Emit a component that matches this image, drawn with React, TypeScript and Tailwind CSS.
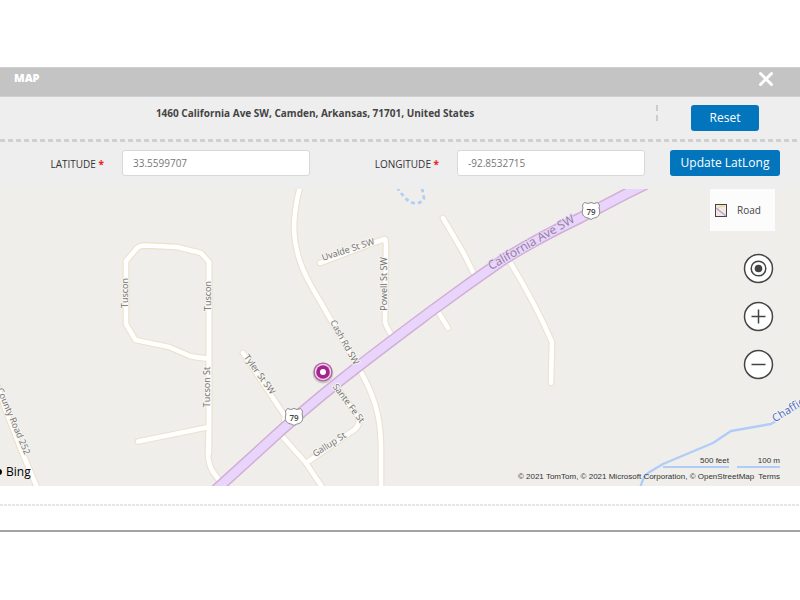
import { useState } from 'react'

type MapLabel = {
  text: string
  x: number
  y: number
  angle: number
  size?: number
  fill?: string
}

const STREETS = [
  'M209 453 L209 262 L201 253 L177 247 L145 245.500 Q140 245.500 137 248 L126 261 L126 324 L135.500 340 L169 347 L190 356 Q198 358 209 358.500',
  'M209 262 L209 425 L208 452 Q208 464 213 472 L222 484',
  'M138 441.500 L209 427',
  'M302 180 Q294 206 294 230 C295 258 307 280 320 301 L362 374 C378 403 381 425 381 450 L381 495',
  'M320 263 L373 243 L385 239 L386 245 L385 322 Q386 326 392 336',
  'M243 353 L285 416 L282 436 L306 463 L326 493',
  'M334 384 L357 415 Q362 424 354 430 L306 463',
  'M443 218 L463 252 L474 274',
  'M437 310 L448 328',
  'M510 262 Q535 303 552 342 L551 383',
  'M-6 376 L6 411 L22 452 L42 499',
]

const HIGHWAY = 'M190 514 L221 485 L265 445 C320 394 370 357 430 312 L470 283 L500 262 Q530 242 580 218 L626 194 L650 182'

const LABELS: MapLabel[] = [
  { text: 'Tuscon', x: 124, y: 293, angle: -90 },
  { text: 'Tuscon', x: 207, y: 296, angle: -90 },
  { text: 'Tucson St', x: 206, y: 387, angle: -90 },
  { text: 'Uvalde St SW', x: 348, y: 249, angle: -18 },
  { text: 'Powell St SW', x: 383, y: 284, angle: -90 },
  { text: 'Cash Rd SW', x: 345, y: 342, angle: 61 },
  { text: 'Tyler St SW', x: 260, y: 374, angle: 54 },
  { text: 'Sante Fe St', x: 349, y: 403, angle: 53 },
  { text: 'Gallup St', x: 329, y: 444, angle: -33 },
  { text: 'County Road 252', x: 14, y: 421, angle: 67 },
  { text: 'California Ave SW', x: 531, y: 242, angle: -30, size: 12, fill: '#8d7c9c' },
  { text: 'Chaffie', x: 788, y: 409, angle: -32, size: 11, fill: '#4a6cc4' },
]

export default function App() {
  const [latitude, setLatitude] = useState('33.5599707')
  const [longitude, setLongitude] = useState('-92.8532715')

  return (
    <div className="min-h-screen bg-white pt-[67px] font-['Open_Sans',sans-serif]">
      <section className="overflow-hidden border-b-2 border-[#a3a3a3]">
        <header className="flex h-[30px] items-start justify-between border-y border-[#d0d0d0] bg-[#c4c4c4] pr-[26px] pl-3.5">
          <h1 className="pt-0.5 text-[11px] leading-4 font-extrabold text-white">MAP</h1>
          <button type="button" aria-label="Close" className="pt-[3px] text-white">
            <CloseIcon />
          </button>
        </header>

        <div className="bg-[#eeeeee]">
          <div className="grid h-[42px] grid-cols-[1fr_110px] items-start gap-3 pt-2 pr-5">
            <div className="flex items-start">
              <p className="flex-1 text-center text-[10px] leading-4 font-bold text-[#444444]">
                1460 California Ave SW, Camden, Arkansas, 71701, United States
              </p>
              <div className="flex w-7 flex-col items-end gap-1" aria-hidden>
                <span className="h-1.5 w-0.5 bg-[#cccccc]" />
                <span className="h-1.5 w-0.5 bg-[#cccccc]" />
              </div>
            </div>
            <button
              type="button"
              onClick={() => {
                setLatitude('33.5599707')
                setLongitude('-92.8532715')
              }}
              className="h-[26px] w-[68px] justify-self-center rounded-[3px] bg-[#0275bd] text-xs font-medium text-white"
            >
              Reset
            </button>
          </div>

          <div className="h-[3px] bg-[repeating-linear-gradient(90deg,#d0d0d0_0_5px,transparent_5px_8px)]" />

          <form
            className="grid h-[47px] grid-cols-[1fr_1fr_110px] items-start gap-[25px] pt-2 pr-5"
            onSubmit={(e) => e.preventDefault()}
          >
            <Field id="latitude" label="LATITUDE" value={latitude} onChange={setLatitude} />
            <Field id="longitude" label="LONGITUDE" value={longitude} onChange={setLongitude} />
            <button
              type="submit"
              className="h-[26px] rounded-[3px] bg-[#0275bd] text-xs font-medium whitespace-nowrap text-white"
            >
              Update LatLong
            </button>
          </form>
        </div>

        <MapView />

        <div className="h-11 pt-[18px]">
          <div className="h-0.5 bg-[repeating-linear-gradient(90deg,#e6e6e6_0_3px,transparent_3px_4px)]" />
        </div>
      </section>
    </div>
  )
}

type FieldProps = {
  id: string
  label: string
  value: string
  onChange: (value: string) => void
}

function Field({ id, label, value, onChange }: FieldProps) {
  return (
    <div className="flex items-center gap-[18px]">
      <label htmlFor={id} className="flex-1 pt-0.5 text-right text-[10px] leading-4 font-medium text-[#333333]">
        {label} <span className="font-bold text-[#f02020]">*</span>
      </label>
      <input
        id={id}
        type="text"
        value={value}
        onChange={(e) => onChange(e.target.value)}
        className="h-[26px] w-[188px] min-w-0 rounded-[3px] border border-[#d8d8d8] bg-white px-2.5 text-[10px] text-[#777777]"
      />
    </div>
  )
}

function MapView() {
  return (
    <div className="relative h-[297px] overflow-hidden bg-[#efeeea]">
      <svg
        viewBox="0 189 800 297"
        preserveAspectRatio="xMidYMid slice"
        className="block h-full w-full"
        role="img"
        aria-label="Road map"
      >
        <g fill="none" strokeLinecap="round" strokeLinejoin="round">
          {STREETS.map((d) => (
            <path key={d} d={d} stroke="#ebe1cc" strokeWidth="6.800" />
          ))}
          {STREETS.map((d) => (
            <path key={d} d={d} stroke="#ffffff" strokeWidth="4.600" />
          ))}
          <path d={HIGHWAY} stroke="#d2aed6" strokeWidth="11.500" />
          <path d={HIGHWAY} stroke="#e9d5fb" strokeWidth="8.500" />
          <path
            d="M397 187 Q403 197 410 202 Q420 206 424 198 L422 188"
            stroke="#b3cdf5"
            strokeWidth="2.800"
            strokeDasharray="4 3"
            strokeLinecap="butt"
          />
          <path
            d="M640 489 Q643 476 648 473 L663 464 L713 443 L731 431 L771 424 L804 404"
            stroke="#b0cdf8"
            strokeWidth="2.400"
          />
        </g>

        <g className="font-['Open_Sans',sans-serif]" textAnchor="middle" dominantBaseline="central">
          {LABELS.map(({ text, x, y, angle, size = 9, fill = '#6f6f6f' }) => (
            <text
              key={`${text}-${x}`}
              x={x}
              y={y}
              fontSize={size}
              fontWeight={size === 9 ? 400 : 500}
              fill={fill}
              stroke={size === 12 ? '#e9d5fb' : '#f6f5f1'}
              strokeWidth="2"
              strokeLinejoin="round"
              paintOrder="stroke"
              transform={`rotate(${angle} ${x} ${y})`}
            >
              {text}
            </text>
          ))}
        </g>

        <Shield x={294} y={417} />
        <Shield x={591} y={211} />

        <circle cx="323" cy="373" r="10.500" fill="#000000" opacity="0.150" />
        <circle cx="323" cy="372" r="9.500" fill="#b45aa6" />
        <circle cx="323" cy="372" r="8.300" fill="#ecd6ea" />
        <circle cx="323" cy="372" r="6.800" fill="#a4248f" />
        <circle cx="323" cy="372" r="3" fill="#ffffff" />
      </svg>

      <button
        type="button"
        className="absolute top-0 right-[25px] flex h-[42px] w-[65px] items-center gap-2.5 bg-[#fcfcfc] pl-[5px] text-[10px] text-[#444444]"
      >
        <RoadIcon />
        Road
      </button>

      <div className="absolute top-[64px] right-[26px] flex flex-col gap-[17px]">
        <button type="button" aria-label="Locate me">
          <ControlIcon>
            <circle cx="15.500" cy="15.500" r="7.300" />
            <circle cx="15.500" cy="15.500" r="3.800" fill="#444444" stroke="none" />
          </ControlIcon>
        </button>
        <button type="button" aria-label="Zoom in">
          <ControlIcon>
            <path d="M8.500 15.500h14M15.500 8.500v14" />
          </ControlIcon>
        </button>
        <button type="button" aria-label="Zoom out">
          <ControlIcon>
            <path d="M8.500 15.500h14" />
          </ControlIcon>
        </button>
      </div>

      <div className="absolute bottom-1.5 left-[-4px] flex items-center gap-1 text-xs leading-4 text-black">
        <span className="size-1.5 rounded-full bg-black" />
        Bing
      </div>

      <div className="absolute right-5 bottom-1 flex flex-col items-end gap-1 font-['Liberation_Sans',sans-serif] text-[8px] leading-[10px] text-[#333333]">
        <div className="flex gap-2 text-right">
          <span className="w-[66px] border-b-2 border-[#b0cdf8]">500 feet</span>
          <span className="w-[43px] border-b-2 border-[#b0cdf8]">100 m</span>
        </div>
        <div className="flex gap-1 whitespace-nowrap">
          <span>© 2021 TomTom, © 2021 Microsoft Corporation, © OpenStreetMap</span>
          <a href="#terms">Terms</a>
        </div>
      </div>
    </div>
  )
}

function Shield({ x, y }: { x: number; y: number }) {
  return (
    <g transform={`translate(${x} ${y})`}>
      <path
        d="M-6.500 -8.500 Q-3 -6.500 0 -8.500 Q3 -6.500 6.500 -8.500 L8.500 -6 Q7.500 -3 8.700 0 Q9 5 5 6.500 Q2 7 0 8.500 Q-2 7 -5 6.500 Q-9 5 -8.700 0 Q-7.500 -3 -8.500 -6 Z"
        fill="#ffffff"
        stroke="#8c8c8c"
        strokeWidth="1"
        strokeLinejoin="round"
      />
      <text
        y="4"
        textAnchor="middle"
        fontSize="8"
        fontWeight="600"
        fill="#444444"
        className="font-['Open_Sans',sans-serif]"
      >
        79
      </text>
    </g>
  )
}

function ControlIcon({ children }: { children: React.ReactNode }) {
  return (
    <svg width="31" height="31" viewBox="0 0 31 31" fill="none" stroke="#444444" strokeWidth="1.500">
      <circle cx="15.500" cy="15.500" r="14" fill="#ffffff" />
      {children}
    </svg>
  )
}

function RoadIcon() {
  return (
    <svg width="12" height="13" viewBox="0 0 12 13" fill="none" aria-hidden="true">
      <rect x="0.500" y="0.500" width="11" height="12" fill="#eeeae2" stroke="#444444" />
      <path d="M2 5l4-3h4" stroke="#f0c878" />
      <path d="M1 4l10 8" stroke="#c49ad0" strokeWidth="1.500" />
    </svg>
  )
}

function CloseIcon() {
  return (
    <svg
      width="16"
      height="16"
      viewBox="0 0 16 16"
      fill="none"
      stroke="currentColor"
      strokeWidth="3"
      strokeLinecap="round"
      aria-hidden="true"
    >
      <path d="M2.500 2.500l11 11M13.500 2.500l-11 11" />
    </svg>
  )
}
